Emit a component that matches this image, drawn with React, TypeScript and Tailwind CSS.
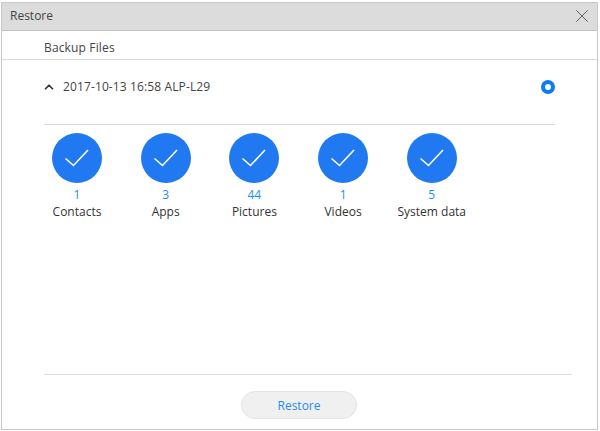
import React from 'react'
import { X, ChevronUp } from 'lucide-react'

const items = [
  { count: 1, label: 'Contacts' },
  { count: 3, label: 'Apps' },
  { count: 44, label: 'Pictures' },
  { count: 1, label: 'Videos' },
  { count: 5, label: 'System data' },
]

function CheckCircle() {
  return (
    <div className="flex h-[50px] w-[50px] items-center justify-center rounded-full bg-[#2179f2]">
      <svg width="26" height="20" viewBox="0 0 26 20" fill="none" stroke="#fff" strokeWidth="1.6">
        <path d="M1.5 10.5 L9.5 17.5 L24 2" />
      </svg>
    </div>
  )
}

export default function App() {
  return (
    <div className="h-[431px] w-[600px] bg-white pt-[2px] pl-[1px] pr-[2px] pb-[1px] font-['Open_Sans',sans-serif] text-[12px] text-[#444]">
      <div className="flex h-full flex-col border border-[#c8c8c8]">
        {/* Header */}
        <header className="flex h-[28px] shrink-0 items-center justify-between border-b border-[#c4c4c4] bg-[#dcdcdc] pb-[2px] pl-[8px] pr-[4px]">
          <span className="text-[#444]">Restore</span>
          <X size={22} strokeWidth={1} className="text-[#555]" />
        </header>

        <div className="flex h-[29px] shrink-0 items-center border-b border-[#dcdcdc] pl-[42px] pt-[5px] tracking-[0.15px]">Backup Files</div>

        {/* Backup entry */}
        <div className="flex flex-1 flex-col pl-[42px]">
          <div className="flex h-[54px] items-center pr-[42px]">
            <ChevronUp size={14} strokeWidth={3} className="-ml-[2px] text-[#333]" />
            <span className="ml-[7px] tracking-[0.12px]">2017-10-13 16:58 ALP-L29</span>
            <span className="ml-auto h-[14px] w-[14px] rounded-full border-[4px] border-[#0a7cf5]" />
          </div>

          <div className="mt-[10px] mr-[42px] border-t border-[#dcdcdc] pt-[8px] pl-[8px]">
            <div className="flex gap-[38.7px]">
              {items.map((item) => (
                <div key={item.label} className="flex w-[50px] flex-col items-center">
                  <CheckCircle />
                  <span className="mt-[4px] leading-[16px] text-[#1e8cfa]">{item.count}</span>
                  <span className="whitespace-nowrap leading-[18px] text-[#333]">{item.label}</span>
                </div>
              ))}
            </div>
          </div>
        </div>

        {/* Footer */}
        <footer className="flex h-[55px] shrink-0 flex-col">
          <div className="ml-[42px] mr-[25px] border-t border-[#dcdcdc]" />
          <button className="mt-[16px] ml-[239px] h-[28px] w-[116px] rounded-full border border-[#e4e4e4] bg-[#f0f0f0] pt-[1px] text-[#1e8cfa]">
            Restore
          </button>
        </footer>
      </div>
    </div>
  )
}
